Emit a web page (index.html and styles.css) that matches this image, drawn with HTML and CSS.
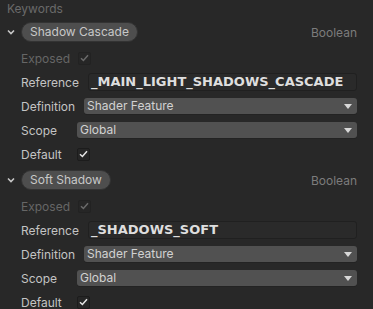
FILE: index.html
```html
<!DOCTYPE html>
<html lang="en">
<head>
  <meta charset="UTF-8">
  <title>Keywords</title>
  <link rel="stylesheet" href="styles.css">
</head>
<body>
  <div class="panel">
    <div class="title">Keywords</div>

    <div class="keyword">
      <div class="header">
        <svg class="chevron" width="8" height="6" viewBox="0 0 8 6"><path d="M1 1.5 L4 4.5 L7 1.5" fill="none" stroke="#c8c8c8" stroke-width="1.6"/></svg>
        <span class="pill">Shadow Cascade</span>
        <span class="type">Boolean</span>
      </div>
      <div class="row">
        <span class="label muted w-exposed">Exposed</span>
        <span class="check disabled"><svg width="9" height="8" viewBox="0 0 9 8"><path d="M1 4.2 L3.4 6.5 L8 1.2" fill="none" stroke="currentColor" stroke-width="1.5"/></svg></span>
      </div>
      <div class="row">
        <span class="label w-ref">Reference</span>
        <span class="input">_MAIN_LIGHT_SHADOWS_CASCADE</span>
      </div>
      <div class="row">
        <span class="label w-def">Definition</span>
        <span class="select">Shader Feature<i class="arrow"></i></span>
      </div>
      <div class="row">
        <span class="label w-scope">Scope</span>
        <span class="select">Global<i class="arrow"></i></span>
      </div>
      <div class="row">
        <span class="label w-scope">Default</span>
        <span class="check"><svg width="9" height="8" viewBox="0 0 9 8"><path d="M1 4.2 L3.4 6.5 L8 1.2" fill="none" stroke="currentColor" stroke-width="1.5"/></svg></span>
      </div>
    </div>

    <div class="keyword">
      <div class="header">
        <svg class="chevron" width="8" height="6" viewBox="0 0 8 6"><path d="M1 1.5 L4 4.5 L7 1.5" fill="none" stroke="#c8c8c8" stroke-width="1.6"/></svg>
        <span class="pill">Soft Shadow</span>
        <span class="type">Boolean</span>
      </div>
      <div class="row">
        <span class="label muted w-exposed">Exposed</span>
        <span class="check disabled"><svg width="9" height="8" viewBox="0 0 9 8"><path d="M1 4.2 L3.4 6.5 L8 1.2" fill="none" stroke="currentColor" stroke-width="1.5"/></svg></span>
      </div>
      <div class="row">
        <span class="label w-ref">Reference</span>
        <span class="input">_SHADOWS_SOFT</span>
      </div>
      <div class="row">
        <span class="label w-def">Definition</span>
        <span class="select">Shader Feature<i class="arrow"></i></span>
      </div>
      <div class="row">
        <span class="label w-scope">Scope</span>
        <span class="select">Global<i class="arrow"></i></span>
      </div>
      <div class="row">
        <span class="label w-scope">Default</span>
        <span class="check"><svg width="9" height="8" viewBox="0 0 9 8"><path d="M1 4.2 L3.4 6.5 L8 1.2" fill="none" stroke="currentColor" stroke-width="1.5"/></svg></span>
      </div>
    </div>
  </div>
</body>
</html>
```

FILE: styles.css
```css
body {
  margin: 0;
  background-color: #282828;
  font-family: Inter, "DejaVu Sans", sans-serif;
  font-size: 12px;
  color: #c4c4c4;
}
.panel {
  padding: 0 16px 0 7px;
}
.title {
  height: 18px;
  line-height: 18px;
  color: #6a6a6a;
}
.header {
  height: 28px;
  display: flex;
  align-items: center;
}
.chevron {
  width: 8px;
  margin-right: 6px;
}
.pill {
  height: 18px;
  line-height: 18px;
  padding: 0 8px;
  border-radius: 10px;
  background-color: #4e4e4e;
  border: 1px solid #333;
  color: #c8c8c8;
}
.type {
  margin-left: auto;
  color: #7c7c7c;
}
.row {
  height: 24px;
  display: flex;
  align-items: center;
  padding-left: 14px;
}
.label {
  flex-shrink: 0;
}
.muted {
  color: #666;
}
.w-exposed { width: 57px; }
.w-ref { width: 67px; }
.w-def { width: 63px; }
.w-scope { width: 56px; }
.check {
  width: 11px;
  height: 11px;
  border: 1px solid #1c1c1c;
  background-color: #262626;
  border-radius: 2px;
  display: flex;
  align-items: center;
  justify-content: center;
  color: #e6e6e6;
}
.check.disabled {
  color: #6a6a6a;
  border-color: #222;
}
.input {
  flex: 1;
  height: 16px;
  line-height: 16px;
  padding: 0 2px;
  background-color: #2a2a2a;
  border: 1px solid #202020;
  border-radius: 3px;
  font-family: "DejaVu Sans", sans-serif;
  font-weight: bold;
  font-size: 13px;
  color: #dedede;
}
.select {
  flex: 1;
  height: 16px;
  line-height: 16px;
  padding: 0 0 0 3px;
  background-color: #515151;
  border-radius: 3px;
  box-shadow: 0 1px 0 #232323;
  color: #d2d2d2;
  display: flex;
  align-items: center;
}
.arrow {
  margin-left: auto;
  margin-right: 5px;
  width: 0;
  height: 0;
  border-left: 4px solid transparent;
  border-right: 4px solid transparent;
  border-top: 5px solid #d8d8d8;
}
```
